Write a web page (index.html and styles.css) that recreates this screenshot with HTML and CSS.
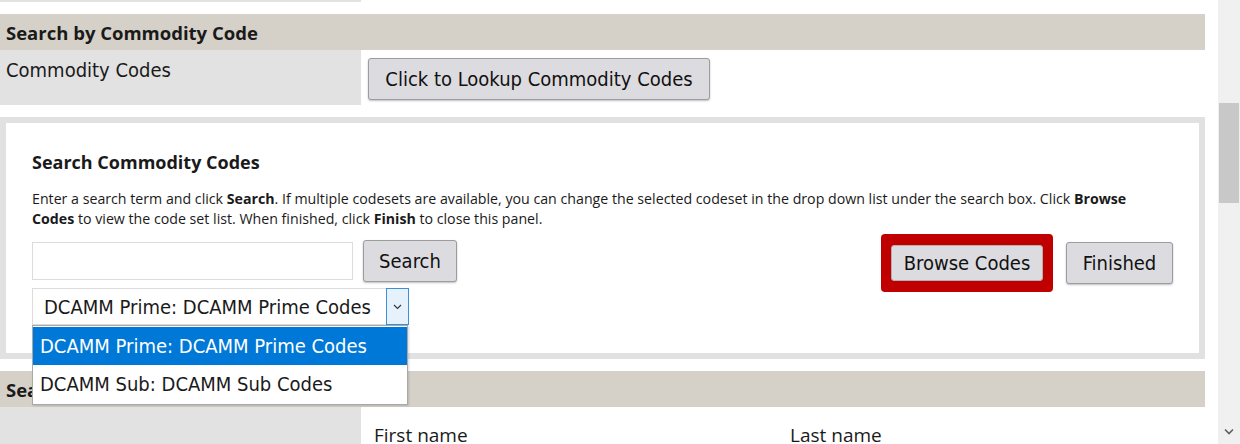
FILE: index.html
```html
<!DOCTYPE html>
<html lang="en">
<head>
    <meta charset="UTF-8">
    <title>Search by Commodity Code</title>
    <link rel="stylesheet" href="styles.css">
</head>
<body>
    <div class="page">
        <div class="prev-row">
            <div class="field-label"></div>
        </div>

        <div class="section-title">Search by Commodity Code</div>
        <div class="field-row">
            <div class="field-label">Commodity Codes</div>
            <div class="field-value">
                <button type="button" class="btn btn-lookup">Click to Lookup Commodity Codes</button>
            </div>
        </div>

        <div class="panel">
            <h4>Search Commodity Codes</h4>
            <p>Enter a search term and click <b>Search</b>. If multiple codesets are available, you can change the selected codeset in the drop down list under the search box. Click <b>Browse Codes</b> to view the code set list. When finished, click <b>Finish</b> to close this panel.</p>

            <div class="search-bar">
                <div class="search-left">
                    <div class="search-line">
                        <input type="text" class="search-input">
                        <button type="button" class="btn btn-search">Search</button>
                    </div>
                    <div class="codeset">
                        <div class="select">
                            <span class="select-text">DCAMM Prime: DCAMM Prime Codes</span>
                            <span class="select-arrow">
                                <svg width="9" height="6" viewBox="0 0 9 6"><path d="M1 1l3.5 3.5L8 1" fill="none" stroke="#333" stroke-width="1.1"/></svg>
                            </span>
                        </div>
                        <ul class="select-list">
                            <li class="selected">DCAMM Prime: DCAMM Prime Codes</li>
                            <li>DCAMM Sub: DCAMM Sub Codes</li>
                        </ul>
                    </div>
                </div>
                <div class="search-right">
                    <div class="highlight">
                        <button type="button" class="btn btn-browse">Browse Codes</button>
                    </div>
                    <button type="button" class="btn btn-finish">Finished</button>
                </div>
            </div>
        </div>

        <div class="section-title">Search by Contact Name</div>
        <div class="field-row">
            <div class="field-label"></div>
            <div class="name-cols">
                <span class="name-first">First name</span>
                <span class="name-last">Last name</span>
            </div>
        </div>
    </div>

    <div class="scrollbar">
        <div class="scroll-thumb"></div>
        <div class="scroll-down">
            <svg width="10" height="7" viewBox="0 0 10 7"><path d="M1 1.5l4 4 4-4" fill="none" stroke="#606060" stroke-width="1.6"/></svg>
        </div>
    </div>
</body>
</html>
```

FILE: styles.css
```css
* {
    box-sizing: border-box;
}
body {
    margin: 0;
    height: 444px;
    overflow: hidden;
    display: flex;
    background-color: #fff;
    font-family: "Open Sans", sans-serif;
    color: #1a1a1a;
}
.page {
    width: 1205px;
    margin-right: 13px;
}
.prev-row {
    height: 2px;
    display: flex;
}
.prev-row .field-label {
    height: 2px;
    min-height: 0;
    padding: 0;
}
.section-title {
    margin-top: 12px;
    height: 36px;
    padding: 6px 6px 0;
    background-color: #d5d1c9;
    font-weight: bold;
    font-size: 18.5px;
    white-space: nowrap;
}
.field-row {
    display: flex;
}
.field-label {
    width: 361px;
    min-height: 55px;
    padding: 8px 6px 0;
    background-color: #e2e2e2;
    font-family: "DejaVu Sans", sans-serif;
    font-stretch: condensed;
    font-size: 20px;
}
.field-value {
    padding: 8px 7px 5px;
}
.btn {
    font-family: "DejaVu Sans", sans-serif;
    font-stretch: condensed;
    font-size: 20px;
    color: #111;
    background-color: #dcdce0;
    border: 1px solid #9c9c9c;
    border-radius: 3px;
    box-shadow: 0 1px 2px rgba(0, 0, 0, 0.25);
    height: 42px;
    padding: 0;
    white-space: nowrap;
    cursor: pointer;
}
.btn-lookup {
    width: 342px;
}
.panel {
    margin-top: 12px;
    border: 6px solid #e1e1e1;
    padding: 27px 26px 28px;
}
.panel h4 {
    margin: 0;
    font-size: 18px;
    line-height: 24px;
}
.panel p {
    margin: 15px 40px 12px 0;
    font-size: 14.2px;
    line-height: 19.5px;
}
.search-bar {
    display: flex;
    justify-content: space-between;
    align-items: flex-start;
}
.search-line {
    display: flex;
    align-items: center;
    gap: 10px;
}
.search-input {
    width: 321px;
    height: 38px;
    border: 1px solid #dcdcdc;
}
.btn-search {
    width: 94px;
}
.codeset {
    position: relative;
    margin-top: 6px;
}
.select {
    width: 377px;
    height: 37px;
    display: flex;
    align-items: center;
    justify-content: space-between;
    border: 1px solid #dcdcdc;
    padding-left: 11px;
    font-family: "DejaVu Sans", sans-serif;
    font-stretch: condensed;
    font-size: 20px;
}
.select-arrow {
    width: 23px;
    height: 37px;
    margin: -1px -1px -1px 0;
    display: flex;
    align-items: center;
    justify-content: center;
    background-color: #e5f1fb;
    border: 1px solid #3c8fd8;
}
.select-list {
    position: absolute;
    top: 37px;
    left: 0;
    width: 376px;
    margin: 0;
    padding: 1px 0;
    list-style-type: none;
    background-color: #fff;
    border: 1px solid #a8a8a8;
    box-shadow: 1px 1px 2px rgba(0, 0, 0, 0.15);
    font-family: "DejaVu Sans", sans-serif;
    font-stretch: condensed;
    font-size: 20px;
    z-index: 2;
}
.select-list li {
    height: 38px;
    line-height: 38px;
    padding-left: 7px;
}
.select-list .selected {
    background-color: #0078d7;
    color: #fff;
}
.search-right {
    display: flex;
    align-items: center;
    gap: 13px;
    margin-top: -6px;
}
.highlight {
    background-color: #c00000;
    border-radius: 4px;
    padding: 11px 10px;
}
.btn-browse {
    width: 152px;
    height: 36px;
    box-shadow: none;
    border-color: #b0b0b0;
}
.btn-finish {
    width: 107px;
}
.name-cols {
    padding: 15px 0 0 13px;
    font-size: 19px;
    display: flex;
}
.name-first {
    width: 416px;
}
.scrollbar {
    width: 22px;
    height: 444px;
    background-color: #f0f0f0;
    position: relative;
}
.scroll-thumb {
    position: absolute;
    top: 103px;
    left: 1px;
    width: 20px;
    height: 100px;
    background-color: #c8c8c8;
}
.scroll-down {
    position: absolute;
    bottom: 4px;
    left: 6px;
}
```
